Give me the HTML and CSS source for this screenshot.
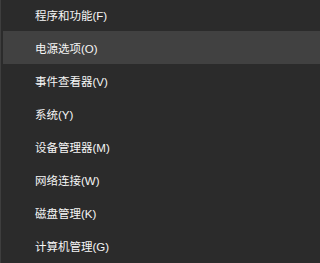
FILE: index.html
```html
<!DOCTYPE html>
<html lang="zh-CN">
<head>
<meta charset="utf-8">
<link rel="stylesheet" href="styles.css">
</head>
<body>
<ul class="menu">
  <li class="item">程序和功能(F)</li>
  <li class="item active">电源选项(O)</li>
  <li class="item">事件查看器(V)</li>
  <li class="item">系统(Y)</li>
  <li class="item">设备管理器(M)</li>
  <li class="item">网络连接(W)</li>
  <li class="item">磁盘管理(K)</li>
  <li class="item">计算机管理(G)</li>
</ul>
</body>
</html>
```
FILE: styles.css
```css
html, body {
  margin: 0;
  padding: 0;
  background: #2b2b2b;
  height: 100%;
  overflow: hidden;
}
.menu {
  list-style: none;
  margin: -2px 0 0 0;
  padding: 0 0 0 2px;
  border-left: 1px solid #3e3e3e;
  box-sizing: border-box;
  height: calc(100% + 2px);
  font-family: "Segoe UI", "Liberation Sans", "Noto Sans CJK SC", sans-serif;
  font-size: 11.5px;
  color: #f6f6f6;
}
.item {
  height: 33px;
  display: flex;
  align-items: center;
  padding-left: 32px;
  white-space: nowrap;
}
.item.active {
  background: #414141;
}
```
